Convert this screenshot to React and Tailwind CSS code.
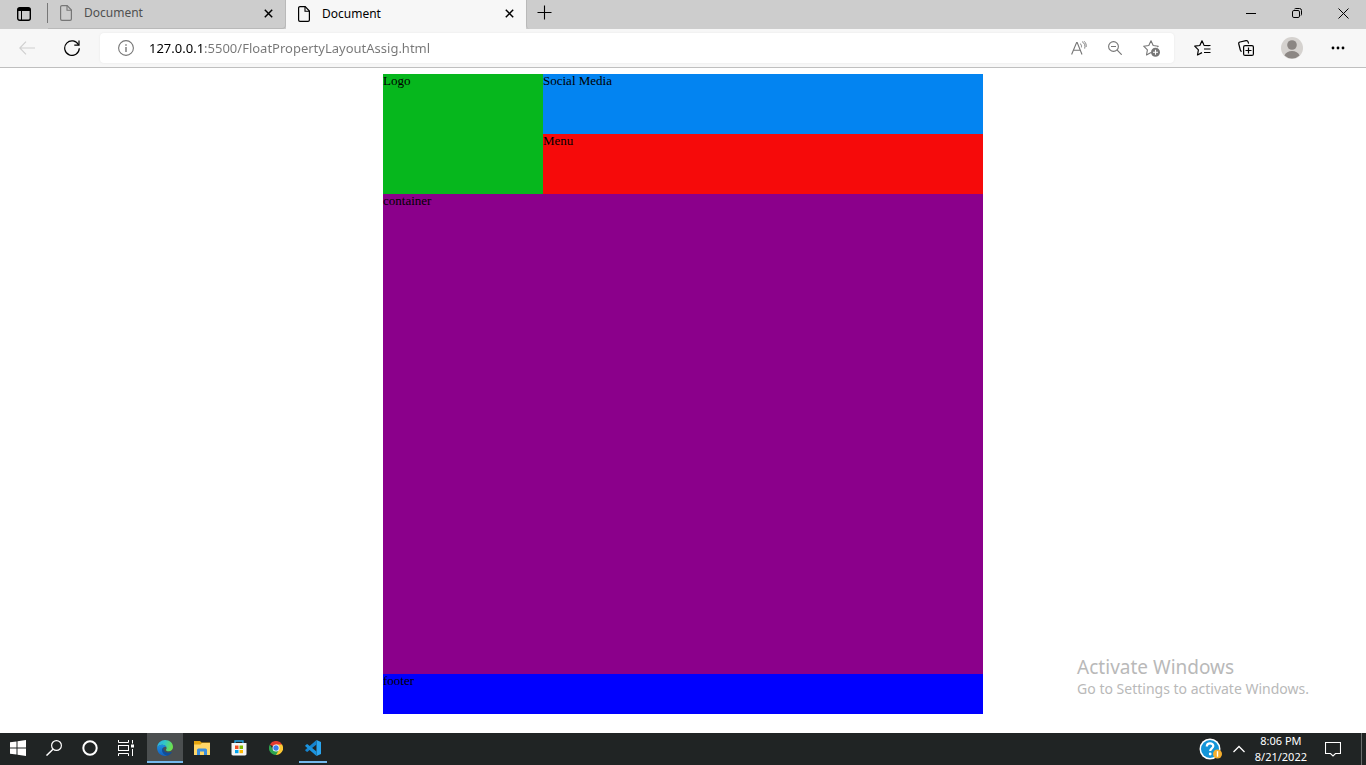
import React from "react";

function Icon({ w, h, label, className = "", children }) {
  return (
    <svg
      width={w}
      height={h}
      viewBox={`0 0 ${w} ${h}`}
      fill="none"
      stroke="currentColor"
      className={`block shrink-0 ${className}`}
      aria-hidden="true"
    >
      {children}
    </svg>
  );
}

const PageIcon = () => (
  <Icon w={12} h={16}>
    <path d="M2 .6h5.2L11.4 5v9a1.4 1.4 0 0 1-1.4 1.4H2A1.4 1.4 0 0 1 .6 14V2A1.4 1.4 0 0 1 2 .6Z" strokeWidth="1.2" />
    <path d="M7 .8V5.2h4.2" strokeWidth="1.1" />
  </Icon>
);

const CloseIcon = () => (
  <Icon w={9} h={9}>
    <path d="m.8.8 7.4 7.4M8.2.8.8 8.2" strokeWidth="1.5" />
  </Icon>
);

function Tab({ title, active }) {
  return (
    <div
      className={`flex items-center pl-3 pr-3 pb-[2px] ${
        active
          ? "w-[240px] bg-[#f7f7f7] text-black"
          : "w-[238px] rounded-br border-b border-r border-[#b9b9b9] bg-[#cdcdcd] text-[#505050]"
      }`}
    >
      <button type="button" className="flex grow items-center gap-3 text-left text-xs">
        <span className={active ? "text-black" : "text-[#777]"}>
          <PageIcon />
        </span>
        {title}
      </button>
      <button type="button" aria-label="Close tab" className="text-black">
        <CloseIcon />
      </button>
    </div>
  );
}

function TabStrip() {
  return (
    <header className="flex h-[29px] bg-[#cdcdcd]">
      <button type="button" aria-label="Tab actions" className="flex w-[47px] items-center justify-center pb-[2px]">
        <Icon w={14} h={14}>
          <rect x=".7" y=".7" width="12.6" height="12.6" rx="2" strokeWidth="1.4" />
          <path d="M1 1h12v3H1z" fill="currentColor" stroke="none" />
          <path d="M4.5 4v9" strokeWidth="1" />
        </Icon>
      </button>
      <span className="mt-[3px] h-[20px] w-px bg-[#777]" />
      <Tab title="Document" />
      <Tab title="Document" active />
      <button
        type="button"
        aria-label="New tab"
        className="flex w-[36px] items-center justify-center rounded-bl border-l border-[#b9b9b9] pb-[4px]"
      >
        <Icon w={15} h={15}>
          <path d="M7.5.5v14M.5 7.5h14" strokeWidth="1.1" />
        </Icon>
      </button>
      <div className="ml-auto flex pb-[3px]">
        <button type="button" aria-label="Minimize" className="flex w-[46px] items-center justify-center">
          <Icon w={10} h={11}>
            <path d="M0 5.5h10" />
          </Icon>
        </button>
        <button type="button" aria-label="Restore" className="flex w-[46px] items-center justify-center">
          <Icon w={10} h={10}>
            <rect x=".5" y="2.5" width="7" height="7" rx="1.4" />
            <path d="M2.5 1C2.8.7 3.2.5 3.7.5h3.8a2 2 0 0 1 2 2v3.8c0 .5-.2.9-.5 1.2" />
          </Icon>
        </button>
        <button type="button" aria-label="Close window" className="flex w-[46px] items-center justify-center">
          <Icon w={11} h={11}>
            <path d="m.5.5 10 10M10.500.5l-10 10" />
          </Icon>
        </button>
      </div>
    </header>
  );
}

const STAR = "M8 .8 5.800 5.500.7 6.200 4.400 9.900 3.500 15 8 12.600";

function Toolbar() {
  return (
    <nav className="flex h-[39px] items-center border-b border-[#bfbfbf] bg-[#f7f7f7]">
      <button type="button" aria-label="Back" className="flex w-[54px] justify-center text-[#cfcfcf]">
        <Icon w={16} h={14}>
          <path d="M7 .6.8 7 7 13.400M.8 7H16" strokeWidth="1.1" />
        </Icon>
      </button>
      <button type="button" aria-label="Refresh" className="flex w-[36px] justify-center">
        <Icon w={16} h={16}>
          <path d="M14.600 5A7.300 7.300 0 1 0 15.300 8.300" strokeWidth="1.2" />
          <path d="M15 .5V5.200H10.300" strokeWidth="1.2" />
        </Icon>
      </button>
      <div className="ml-[10px] flex h-[30px] grow items-center rounded bg-white pl-[18px] shadow-[0_0_2px_#e4e4e4]">
        <button type="button" aria-label="Site information" className="text-[#767676]">
          <Icon w={16} h={16}>
            <circle cx="8" cy="8" r="7.400" strokeWidth="1.1" />
            <path d="M8 7v5M8 4.200v1.500" strokeWidth="1.4" />
          </Icon>
        </button>
        <input
          type="text"
          aria-label="Address"
          defaultValue="127.0.0.1:5500/FloatPropertyLayoutAssig.html"
          className="ml-[15px] h-[24px] min-w-0 grow bg-[linear-gradient(90deg,#000_54px,#767676_54px)] bg-clip-text text-[13px] text-transparent outline-none"
        />
        <div className="flex items-center text-[#767676]">
          <button type="button" aria-label="Read aloud" className="flex w-[36px] justify-center">
            <Icon w={16} h={14}>
              <path d="M.6 13.500 5.600 1.500h.6l4.800 12M2.400 9.300h7" strokeWidth="1.100" />
              <path d="M9 2.500c1.300.9 1.700 2.300 1.400 3.900M11 .6c2.600 1.500 3.500 4 2.700 7M13 .2c1.800 1.500 2.500 3.500 2.200 5.700" strokeWidth=".9" />
            </Icon>
          </button>
          <button type="button" aria-label="Zoom out" className="flex w-[36px] justify-center">
            <Icon w={14} h={14}>
              <circle cx="5.500" cy="5.500" r="4.900" strokeWidth="1.100" />
              <path d="m9.200 9.200 4.500 4.500M3 5.500h5" strokeWidth="1.200" />
            </Icon>
          </button>
          <button type="button" aria-label="Add to favorites" className="mr-[5px] flex w-[36px] justify-center">
            <Icon w={17} h={17}>
              <path d="M8 12.600 3.500 15l.9-5.100L.7 6.200l5.100-.7L8 .8l2.200 4.700 5.100.7-1 1" strokeWidth="1.1" strokeLinejoin="round" />
              <circle cx="12.500" cy="12.300" r="4.500" fill="currentColor" stroke="none" />
              <path d="M12.500 9.800v5M10 12.300h5" stroke="#fff" strokeWidth="1.100" />
            </Icon>
          </button>
        </div>
      </div>
      <div className="ml-[6px] flex items-center pr-[6px]">
        <button type="button" aria-label="Favorites" className="flex w-[44px] justify-center">
          <Icon w={17} h={16}>
            <path d="M15.300 6.200l-5.100-.7L8 .8 5.800 5.500.7 6.200l3.700 3.700L3.500 15 8 12.600" strokeWidth="1.200" strokeLinejoin="round" />
            <path d="M10.500 5.500H17M10.500 9H17M10.500 12.500H17" stroke="#f7f7f7" strokeWidth="2.600" />
            <path d="M10 5.500h6.500M10 9h6.500M10 12.500h6.500" strokeWidth="1.200" />
          </Icon>
        </button>
        <button type="button" aria-label="Collections" className="flex w-[44px] justify-center">
          <Icon w={16} h={16}>
            <rect x="5.600" y="5.600" width="9.800" height="9.800" rx="1.500" strokeWidth="1.200" />
            <path d="M10.500 7.500v6M7.500 10.500h6" strokeWidth="1.200" />
            <path d="M3.700 11.500c-.8-.2-1.200-.7-1.400-1.500L.8 4C.5 2.900 1 2.200 2 2L8 .7c1-.2 1.800.2 2.100 1.200l.5 1.700" strokeWidth="1.200" />
          </Icon>
        </button>
        <button type="button" aria-label="Profile" className="flex w-[48px] justify-center">
          <Icon w={22} h={22}>
            <circle cx="11" cy="11" r="11" fill="#d5d2cf" stroke="none" />
            <circle cx="11" cy="8" r="4.800" fill="#8b8683" stroke="none" />
            <path d="M3.500 18.500c1-3 4-4.500 7.500-4.500s6.500 1.500 7.500 4.500A11 11 0 0 1 11 21.500a11 11 0 0 1-7.500-3Z" fill="#8b8683" stroke="none" />
          </Icon>
        </button>
        <button type="button" aria-label="Settings and more" className="flex w-[44px] justify-center">
          <Icon w={14} h={4}>
            <g fill="currentColor" stroke="none">
              <circle cx="2" cy="2" r="1.400" />
              <circle cx="7" cy="2" r="1.400" />
              <circle cx="12" cy="2" r="1.400" />
            </g>
          </Icon>
        </button>
      </div>
    </nav>
  );
}

function Page() {
  return (
    <main className="relative grow bg-white pt-[6px] pb-[19px]">
      <div className="mx-auto w-full max-w-[600px] font-['Liberation_Serif',serif] text-[13px] leading-[14px] text-black">
        <div className="flex">
          <div className="h-[120px] w-[160px] bg-[#06b71d]">Logo</div>
          <div className="grow">
            <div className="h-[60px] bg-[#0384f1]">Social Media</div>
            <div className="h-[60px] bg-[#f60a0a]">Menu</div>
          </div>
        </div>
        <div className="h-[480px] bg-[#8b008b]">container</div>
        <div className="h-[40px] bg-[#0000ff]">footer</div>
      </div>
      <aside className="absolute right-[57px] bottom-[34px] text-[#b9b9b9]">
        <p className="text-[19px] leading-[24px]">Activate Windows</p>
        <p className="text-[14px] leading-[20px]">Go to Settings to activate Windows.</p>
      </aside>
    </main>
  );
}

function TaskButton({ label, active, running, children }) {
  return (
    <button
      type="button"
      aria-label={label}
      className={`flex h-[30px] w-[36px] flex-col items-center ${active ? "bg-[#4b4f50]" : ""}`}
    >
      <span className="flex grow items-center pt-[2px]">{children}</span>
      <span
        className={`h-[2px] ${active ? "w-full bg-[#76b9ed]" : running ? "w-[28px] bg-[#76b9ed]" : "w-full"}`}
      />
    </button>
  );
}

function Taskbar() {
  return (
    <footer className="flex h-[32px] bg-[#202424] text-white">
      <div className="flex">
        <TaskButton label="Start">
          <Icon w={16} h={16}>
            <path d="M0 2.300 6.500 1.400V7.500H0ZM7.500 1.200 16 0v7.500H7.500ZM0 8.500h6.500v6.100L0 13.700ZM7.500 8.500H16V16L7.500 14.800Z" fill="#fff" stroke="none" />
          </Icon>
        </TaskButton>
        <TaskButton label="Search">
          <Icon w={16} h={16}>
            <circle cx="10.500" cy="5.500" r="4.900" strokeWidth="1.200" />
            <path d="M7 9.200.5 15.600" strokeWidth="1.400" />
          </Icon>
        </TaskButton>
        <TaskButton label="Cortana">
          <Icon w={16} h={16}>
            <circle cx="8" cy="8" r="6.700" strokeWidth="2" />
          </Icon>
        </TaskButton>
        <TaskButton label="Task view">
          <Icon w={16} h={16}>
            <path d="M.5 0v2.500h10V0M.5 16v-2.500h10V16M14.500 0v3.500M14.500 9v7" strokeWidth="1" />
            <rect x=".5" y="5.500" width="10" height="5" />
            <rect x="13" y="4.500" width="3" height="3" fill="#fff" stroke="none" />
          </Icon>
        </TaskButton>
      </div>
      <div className="ml-[3px] flex gap-px">
        <TaskButton label="Microsoft Edge" active>
          <Icon w={16} h={16}>
            <defs>
              <linearGradient id="edgeTop" x1="0" y1="0" x2="1" y2=".3">
                <stop offset="0" stopColor="#2aa9e8" />
                <stop offset=".5" stopColor="#31c6c9" />
                <stop offset="1" stopColor="#6be04f" />
              </linearGradient>
              <linearGradient id="edgeLow" x1="0" y1="0" x2="0" y2="1">
                <stop offset="0" stopColor="#1c8fe0" />
                <stop offset="1" stopColor="#1360bd" />
              </linearGradient>
            </defs>
            <g stroke="none">
              <path d="M.1 7.300C.6 3 4 0 8 0c4.800 0 8 3.200 8 7 0 2.500-1.800 4.300-4.300 4.300-1.800 0-2.800-.7-2.800-1.300 0-.5.7-.8.7-2C9.600 6 7.500 4.700 5.200 4.700 3 4.700 1.200 5.700.1 7.300Z" fill="url(#edgeTop)" />
              <path d="M.1 7.300C1.200 5.500 3 4.700 5.200 4.700c2.400 0 4.100 1.200 4.400 2.800C9 6.900 8.300 6.700 7.600 6.900 5.800 7.400 5 9 5.200 10.500 5.500 13 7.500 15 10.300 15.700 9.600 15.900 8.800 16 8 16 3.300 16-.3 12 .1 7.300Z" fill="url(#edgeLow)" />
              <path d="M6.800 7.300C5.400 8 5 9.300 5.200 10.500c.3 2.700 2.500 4.700 5.200 5.200 1.700-.5 3.300-1.700 4.300-3.200.2-.4-.1-.6-.5-.4C11.500 13.500 7 12.800 6.500 9.500c-.1-.9 0-1.600.3-2.200Z" fill="#0c4f9e" />
            </g>
          </Icon>
        </TaskButton>
        <TaskButton label="File Explorer">
          <Icon w={16} h={14}>
            <g stroke="none">
              <path d="M0 0h6l1.500 1.500H16V5H0Z" fill="#e5a50f" />
              <path d="M0 3.500h6.500L8 2h8v12H0Z" fill="#ffd768" />
              <path d="M3 14V9a1.500 1.500 0 0 1 1.500-1.500h7A1.500 1.500 0 0 1 13 9v5h-3v-3.500H6V14Z" fill="#3b8ede" />
            </g>
          </Icon>
        </TaskButton>
        <TaskButton label="Microsoft Store">
          <Icon w={16} h={16}>
            <path d="M4 4V1h8v3" stroke="#24a6e8" strokeWidth="1.300" />
            <path d="M.5 3h15v10.500A1.700 1.700 0 0 1 13.800 15.500H2.200A1.700 1.700 0 0 1 .5 13.500Z" fill="#f5f5f5" stroke="none" />
            <g stroke="none">
              <path d="M4 5.500h3.500V9H4Z" fill="#f25022" />
              <path d="M8.500 5.500H12V9H8.500Z" fill="#7fba00" />
              <path d="M4 10h3.500v3.200H4Z" fill="#00a4ef" />
              <path d="M8.500 10H12v3.200H8.500Z" fill="#ffb900" />
            </g>
          </Icon>
        </TaskButton>
        <TaskButton label="Google Chrome">
          <Icon w={14} h={14}>
            <g stroke="none">
              <path d="M7 7 .9 3.500A7 7 0 0 1 13.100 3.500Z" fill="#e33b2e" />
              <path d="M7 7V3.500h6.100A7 7 0 0 1 7 14Z" fill="#fcc934" />
              <path d="M7 7 10 8.700 7 14A7 7 0 0 1 .9 3.500L4 8.700Z" fill="#2da44e" />
              <circle cx="7" cy="7" r="3.500" fill="#fff" />
              <circle cx="7" cy="7" r="2.700" fill="#3b7de9" />
            </g>
          </Icon>
        </TaskButton>
        <TaskButton label="Visual Studio Code" running>
          <Icon w={16} h={16}>
            <g stroke="none">
              <path d="M11.500 0 16 2v12l-4.500 2Z" fill="#2ba5ee" />
              <path d="M11.500 0v4.500L2.200 12 .3 10.800v-1Z" fill="#1583ce" />
              <path d="M11.500 16v-4.500L2.200 4 .3 5.200v1Z" fill="#1b93de" />
            </g>
          </Icon>
        </TaskButton>
      </div>
      <div className="ml-auto flex items-center">
        <button type="button" aria-label="Get help" className="flex w-[24px] justify-center">
          <Icon w={24} h={22}>
            <circle cx="11" cy="11" r="10.500" fill="#fff" stroke="none" />
            <circle cx="11" cy="11" r="9" fill="#1395d8" stroke="none" />
            <path d="M7.800 8.500c0-2 1.400-3.200 3.300-3.200s3.200 1.100 3.200 2.800c0 2.200-3.100 2.500-3.100 5" stroke="#fff" strokeWidth="2.200" />
            <circle cx="11.200" cy="16" r="1.400" fill="#fff" stroke="none" />
            <circle cx="18.500" cy="16" r="4.500" fill="#f5ae2c" stroke="none" />
            <path d="M18.500 13.200v5.500" stroke="#fff" strokeWidth="1.400" />
          </Icon>
        </button>
        <button type="button" aria-label="Show hidden icons" className="flex w-[32px] justify-center">
          <Icon w={12} h={8}>
            <path d="m.5 7 5.500-5.500L11.500 7" strokeWidth="1.300" />
          </Icon>
        </button>
        <button type="button" className="text-center text-[11px] leading-[16px]">
          <span className="block">8:06 PM</span>
          <span className="block">8/21/2022</span>
        </button>
        <button type="button" aria-label="Notifications" className="flex w-[52px] justify-center">
          <Icon w={16} h={16}>
            <path d="M.5 1.500h15v11h-5L8 15l-2.500-2.500h-5Z" strokeWidth="1.100" />
          </Icon>
        </button>
        <button type="button" aria-label="Show desktop" className="ml-[2px] h-full w-[5px] border-l border-[#6a6d6d]" />
      </div>
    </footer>
  );
}

export default function App() {
  return (
    <div className="flex min-h-screen flex-col bg-white font-['Noto_Sans','Open_Sans',sans-serif] text-black">
      <TabStrip />
      <Toolbar />
      <Page />
      <Taskbar />
    </div>
  );
}
